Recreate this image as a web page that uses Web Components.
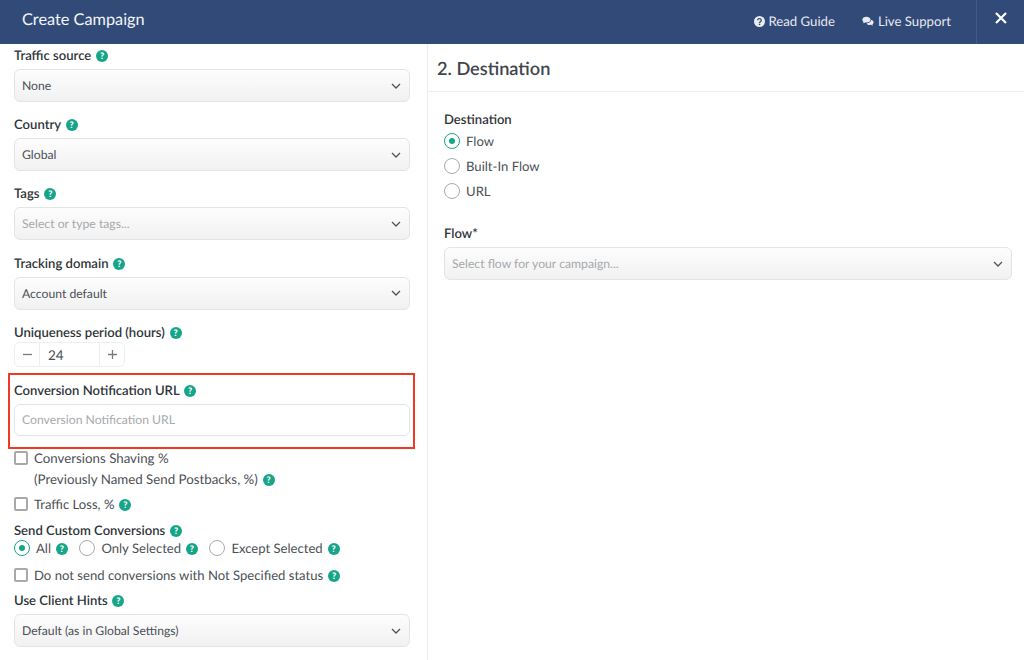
<!DOCTYPE html>
<html>
<head>
<meta charset="utf-8">
<title>Create Campaign</title>
<style>
    html, body { margin: 0; height: 100%; }
    body { width: 1024px; height: 660px; overflow: hidden; background: #fff; font-family: Lato, "Open Sans", sans-serif; font-size: 13.1px; color: #4b5055; text-rendering: geometricPrecision; }
    .dest { padding: 18px 12px 0 16px; }
    .wide { font-size: 13.3px; }
</style>
</head>
<body>
<campaign-dialog>
    <dialog-header slot="header"></dialog-header>

    <div slot="left">
        <form-field label="Traffic source" help><form-select value="None"></form-select></form-field>
        <form-field label="Country" help><form-select value="Global"></form-select></form-field>
        <form-field label="Tags" help><form-select placeholder="Select or type tags..."></form-select></form-field>
        <form-field label="Tracking domain" help><form-select value="Account default"></form-select></form-field>
        <form-field label="Uniqueness period (hours)" help tight><num-stepper value="24"></num-stepper></form-field>
        <red-outline>
            <form-field label="Conversion Notification URL" help flush><text-input placeholder="Conversion Notification URL"></text-input></form-field>
        </red-outline>
        <check-row style="margin-top:-1px"><span class="wide">Conversions Shaving %<br>(Previously Named Send Postbacks, %)</span> <help-dot></help-dot></check-row>
        <check-row style="margin-top:4px">Traffic Loss, % <help-dot></help-dot></check-row>
        <form-field label="Send Custom Conversions" help flush style="margin-top:6px">
            <radio-group style="margin-top:-2px">
                <radio-row inline checked>All <help-dot></help-dot></radio-row>
                <radio-row inline>Only Selected <help-dot></help-dot></radio-row>
                <radio-row inline>Except Selected <help-dot></help-dot></radio-row>
            </radio-group>
        </form-field>
        <check-row style="margin-top:8px">Do not send conversions with Not Specified status <help-dot></help-dot></check-row>
        <form-field label="Use Client Hints" help flush style="margin-top:5px"><form-select value="Default (as in Global Settings)" style="margin-top:3px"></form-select></form-field>
    </div>

    <section-title slot="right">2. Destination</section-title>
    <div slot="right" class="dest">
        <form-field label="Destination" flush>
            <radio-row checked style="margin-top:-2px">Flow</radio-row>
            <radio-row>Built-In Flow</radio-row>
            <radio-row>URL</radio-row>
        </form-field>
        <form-field label="Flow*" flush style="margin-top:21px"><form-select placeholder="Select flow for your campaign..." style="margin-top:3px"></form-select></form-field>
    </div>
</campaign-dialog>

<script>
"use strict";

/**
 * Small helper, every element here just sets its shadow root html once.
 */
function shadow(el, html) {
    el.attachShadow({ mode: "open" }).innerHTML = html;
}

class CampaignDialog extends HTMLElement {
    constructor() {
        super();
        shadow(this, `
            <style>
                :host { display: flex; flex-direction: column; width: 1024px; height: 660px; }
                .body { flex: 1; display: flex; min-height: 0; }
                .left { width: 396px; padding: 2px 17px 0 14px; border-right: 1px solid #eceef0; }
                .right { flex: 1; min-width: 0; }
            </style>
            <slot name="header"></slot>
            <div class="body">
                <div class="left"><slot name="left"></slot></div>
                <div class="right"><slot name="right"></slot></div>
            </div>
        `);
    }
}
customElements.define("campaign-dialog", CampaignDialog);

class DialogHeader extends HTMLElement {
    constructor() {
        super();
        shadow(this, `
            <style>
                :host { display: flex; align-items: stretch; height: 44px; background: #324a78; color: #fff; flex: none; }
                h1 { margin: 0 0 0 22px; font-size: 16.300px; font-weight: 400; line-height: 39px; flex: 1; color: #f3f5f8; }
                .link { display: flex; align-items: center; gap: 3px; font-size: 13.200px; color: #e6e9ef; padding-bottom: 2px; }
                .guide { margin-right: 27px; }
                .support { margin-right: 25px; gap: 4px; }
                .close { width: 48px; border-left: 1px solid #43598a; display: flex; justify-content: center; padding: 12px 0 0 1px; box-sizing: border-box; }
                svg { display: block; }
            </style>
            <h1>Create Campaign</h1>
            <div class="link guide">
                <svg width="11" height="11" viewBox="0 0 12 12"><circle cx="6" cy="6" r="6" fill="#e9ecf2"/><path d="M4.100 4.700a1.900 1.900 0 1 1 2.900 1.600c-.6.4-1 .6-1 1.200" fill="none" stroke="#324a78" stroke-width="1.400"/><rect x="5.200" y="8.400" width="1.600" height="1.500" fill="#324a78"/></svg>
                <span>Read Guide</span>
            </div>
            <div class="link support">
                <svg width="12" height="11" viewBox="0 0 14 12"><path d="M5.200 0.600C2.500 0.600 .4 2.100.4 4c0 1 .6 1.900 1.500 2.500-.1.600-.5 1.200-.9 1.600 1 0 1.900-.4 2.600-1 .5.100 1 .2 1.600.2 2.700 0 4.800-1.500 4.800-3.300S7.900.6 5.200.6z" fill="#e9ecf2"/><path d="M10.700 3.900c0 2.400-2.500 4.200-5.300 4.300.7 1.100 2.100 1.800 3.800 1.800.5 0 1-.1 1.400-.2.600.5 1.400.9 2.300.9-.4-.4-.7-.9-.8-1.400.8-.5 1.400-1.300 1.400-2.200 0-1.500-1.200-2.700-2.900-3.200z" fill="#e9ecf2"/></svg>
                <span>Live Support</span>
            </div>
            <div class="close">
                <svg width="12" height="12" viewBox="0 0 12 12"><path d="M1 1l10 10M11 1L1 11" stroke="#fff" stroke-width="2.200" fill="none"/></svg>
            </div>
        `);
    }
}
customElements.define("dialog-header", DialogHeader);

class HelpDot extends HTMLElement {
    constructor() {
        super();
        shadow(this, `
            <style>
                :host { display: inline-flex; align-items: center; justify-content: center; width: 12px; height: 12px; border-radius: 50%; background: #17a589; vertical-align: 1px; margin-left: 1.500px; line-height: 12px; }
                span { color: #fff; font: 900 9px/12px Lato, sans-serif; }
            </style>
            <span>?</span>
        `);
    }
}
customElements.define("help-dot", HelpDot);

class FormField extends HTMLElement {
    constructor() {
        super();
        const label = this.getAttribute("label");
        const help = this.hasAttribute("help") ? "<help-dot></help-dot>" : "";
        shadow(this, `
            <style>
                :host { display: block; margin-bottom: 13.200px; }
                :host([tight]) { margin-bottom: 6px; }
                :host([flush]) { margin-bottom: 0; }
                label { display: block; font-size: 13.100px; line-height: 19px; height: 20px; font-weight: 600; color: #2f3438; margin-bottom: 3px; }
                :host([tight]) label { margin-bottom: 0; height: 19.500px; }
                :host([flush]) label { margin-bottom: 0; }
            </style>
            <label>${label} ${help}</label>
            <slot></slot>
        `);
    }
}
customElements.define("form-field", FormField);

class FormSelect extends HTMLElement {
    constructor() {
        super();
        const value = this.getAttribute("value");
        const placeholder = this.getAttribute("placeholder");
        shadow(this, `
            <style>
                :host { display: flex; align-items: center; justify-content: space-between; box-sizing: border-box; height: 33px; padding: 0 8px 0 7px; border: 1px solid #e2e4e6; border-radius: 6px; background: linear-gradient(#fdfdfd, #f1f1f1); }
                .v { color: #4b5055; font-size: 12.200px; }
                .p { color: #a6a9ad; font-size: 12.200px; }
                svg { display: block; }
            </style>
            <span class="${value ? "v" : "p"}">${value || placeholder}</span>
            <svg width="10" height="6" viewBox="0 0 10 6"><path d="M1 1l4 4 4-4" stroke="#50555a" stroke-width="1.300" fill="none"/></svg>
        `);
    }
}
customElements.define("form-select", FormSelect);

class TextInput extends HTMLElement {
    constructor() {
        super();
        shadow(this, `
            <style>
                :host { display: flex; align-items: center; box-sizing: border-box; height: 32px; padding: 0 7px; border: 1px solid #e2e4e6; border-radius: 6px; background: #fff; margin-top: 3px; }
                span { color: #a6a9ad; font-size: 12.200px; }
            </style>
            <span>${this.getAttribute("placeholder")}</span>
        `);
    }
}
customElements.define("text-input", TextInput);

class NumStepper extends HTMLElement {
    constructor() {
        super();
        shadow(this, `
            <style>
                :host { display: flex; box-sizing: border-box; width: 111px; height: 25px; border: 1px solid #eceef0; border-radius: 5px; font-size: 13.500px; color: #4b5055; }
                div { display: flex; align-items: center; justify-content: center; }
                .b { width: 24px; }
                .n { flex: 1; justify-content: flex-start; padding-left: 8px; border: solid #eceef0; border-width: 0 1px; }
            </style>
            <div class="b"><svg width="11" height="11" viewBox="0 0 11 11"><path d="M1 5.500h9" stroke="#777c80" stroke-width="1.300"/></svg></div>
            <div class="n">${this.getAttribute("value")}</div>
            <div class="b"><svg width="11" height="11" viewBox="0 0 11 11"><path d="M1 5.500h9M5.500 1v9" stroke="#777c80" stroke-width="1.300"/></svg></div>
        `);
    }
}
customElements.define("num-stepper", NumStepper);

/**
 * The annotation box, sits a bit outside the column on both sides.
 */
class RedOutline extends HTMLElement {
    constructor() {
        super();
        shadow(this, `
            <style>
                :host { display: block; margin: 4px -5px 0 -6px; padding: 5.500px 3px 11.500px 4px; border: 2px solid #ee3a22; }
            </style>
            <slot></slot>
        `);
    }
}
customElements.define("red-outline", RedOutline);

class CheckRow extends HTMLElement {
    constructor() {
        super();
        shadow(this, `
            <style>
                :host { display: flex; line-height: 21px; color: #4b5055; }
                .box { flex: none; box-sizing: border-box; width: 14px; height: 14px; margin: 3px 6px 0 0; border: 2px solid #a9a9a9; border-radius: 2px; background: #fff; }
            </style>
            <div class="box"></div>
            <div><slot></slot></div>
        `);
    }
}
customElements.define("check-row", CheckRow);

class RadioGroup extends HTMLElement {
    constructor() {
        super();
        shadow(this, `
            <style>
                :host { display: flex; align-items: center; height: 18px; gap: 11.500px; }
            </style>
            <slot></slot>
        `);
    }
}
customElements.define("radio-group", RadioGroup);

class RadioRow extends HTMLElement {
    constructor() {
        super();
        shadow(this, `
            <style>
                :host { display: flex; align-items: center; height: 25px; color: #4b5055; }
                :host([inline]) { height: 18px; }
                .dot { flex: none; box-sizing: border-box; width: 16px; height: 16px; margin-right: 6px; border: 1.500px solid #a9a9a9; border-radius: 50%; display: flex; align-items: center; justify-content: center; background: #fff; }
                :host([checked]) .dot { border-color: #17a589; }
                :host([checked]) .dot::after { content: ""; width: 6px; height: 6px; border-radius: 50%; background: #17a589; }
            </style>
            <div class="dot"></div>
            <div><slot></slot></div>
        `);
    }
}
customElements.define("radio-row", RadioRow);

class SectionTitle extends HTMLElement {
    constructor() {
        super();
        shadow(this, `
            <style>
                :host { display: block; height: 48px; box-sizing: border-box; padding-left: 9px; border-bottom: 1px solid #eceef0; font-size: 18.200px; font-weight: 600; line-height: 49px; color: #3f464c; }
            </style>
            <slot></slot>
        `);
    }
}
customElements.define("section-title", SectionTitle);
</script>
</body>
</html>
